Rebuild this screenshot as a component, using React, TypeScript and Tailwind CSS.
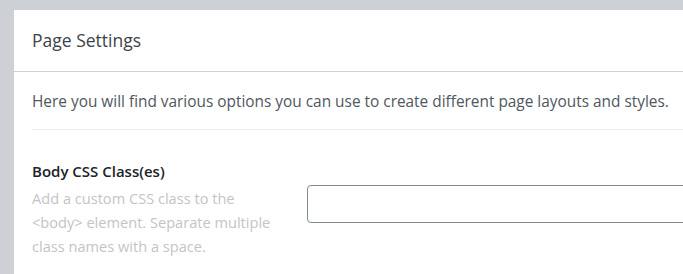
export default function App() {
  return (
    <div
      className="h-[274px] w-[683px] overflow-hidden bg-[#cdd0d4] pl-[14px] pt-[10px]"
      style={{ fontFamily: '"Open Sans", "Noto Sans", sans-serif' }}
    >
      <div className="h-full w-[700px] bg-white">
        <div className="flex h-[62px] items-center border-b border-[#d0d2d4] px-[18px]">
          <h2 className="text-[17.5px] text-[#3c434a]">Page Settings</h2>
        </div>
        <div className="px-[18px]">
          <p className="border-b border-[#ececec] pt-[18px] pb-[15px] text-[15.4px] leading-[24px] whitespace-nowrap text-[#50575e]">
            Here you will find various options you can use to create different page layouts and styles.
          </p>
          <div className="flex pt-[30px]">
            <div className="w-[275px] shrink-0">
              <div className="text-[15px] font-semibold leading-[22px] text-[#1d2327]">
                Body CSS Class(es)
              </div>
              <p className="mt-[4px] w-[250px] text-[14.6px] leading-[24px] text-[#c3c4c7]">
                Add a custom CSS class to the &lt;body&gt; element. Separate multiple class names with a space.
              </p>
            </div>
            <input
              type="text"
              className="mt-[25px] h-[38px] w-[400px] rounded-[4px] border border-[#7e8993] bg-white"
            />
          </div>
        </div>
      </div>
    </div>
  );
}
